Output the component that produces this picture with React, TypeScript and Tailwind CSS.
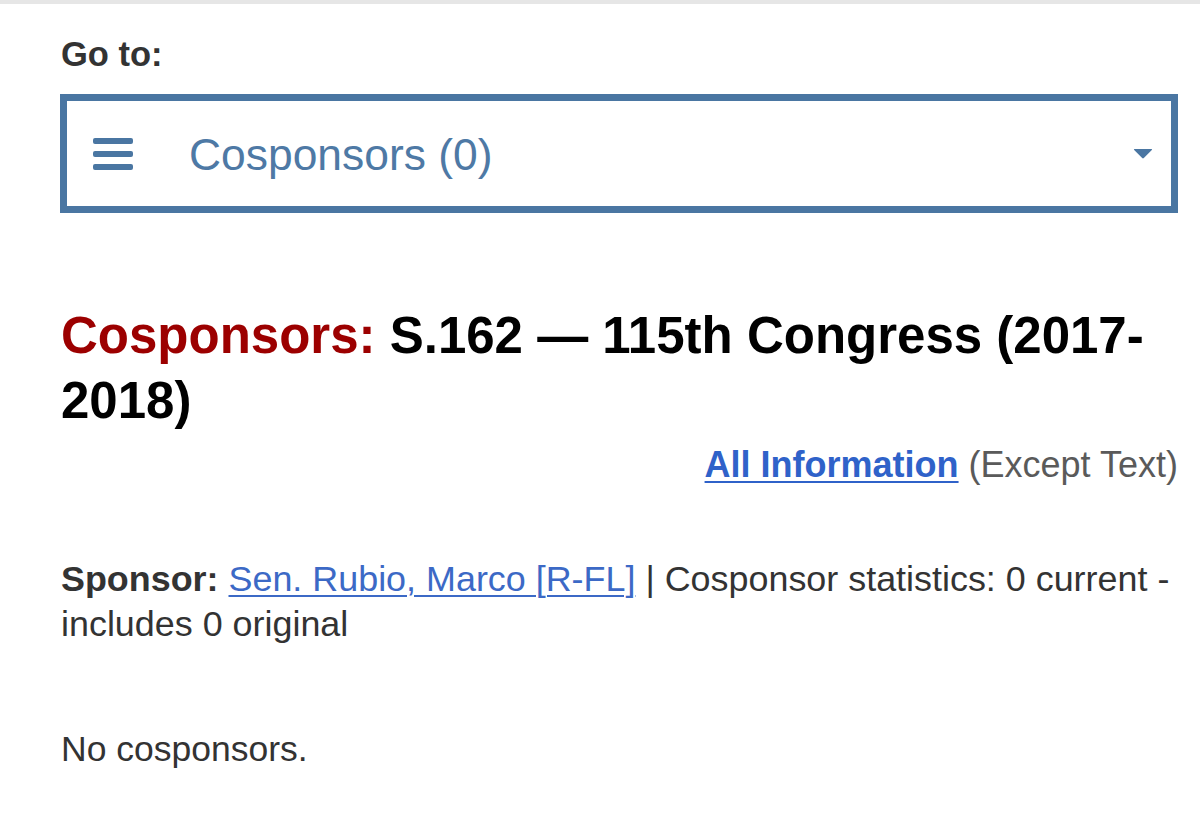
import * as React from "react"

const FONT = { fontFamily: '"Liberation Sans", Arial, Helvetica, sans-serif' }

function MenuIcon() {
  return (
    <div className="flex w-[40px] flex-col gap-[7px]">
      <span className="block h-[6px] w-full rounded-[2px] bg-[#4a76a2]" />
      <span className="block h-[6px] w-full rounded-[2px] bg-[#4a76a2]" />
      <span className="block h-[6px] w-full rounded-[2px] bg-[#4a76a2]" />
    </div>
  )
}

function Caret() {
  return (
    <svg width="20" height="11" viewBox="0 0 20 11" className="shrink-0">
      <path d="M1.5 1 L18.5 1 Q19.6 1 18.8 1.9 L10.8 10 Q10 10.8 9.2 10 L1.2 1.9 Q0.4 1 1.5 1 Z" fill="#4a76a2" />
    </svg>
  )
}

export default function App() {
  return (
    <div className="min-h-[836px] w-[1200px] bg-white" style={FONT}>
      <div className="h-[4px] w-full bg-[#e6e6e6]" />

      <div className="px-[61px] pr-[22px]">
        {/* Go to */}
        <div className="mt-[30px] text-[34.5px] font-bold leading-[40px] text-[#333333]">Go to:</div>

        <div className="-ml-[1px] mt-[20px] flex h-[119px] items-center border-[7px] border-[#4a76a2] pl-[26px] pr-[18px]">
          <MenuIcon />
          <div className="ml-[56px] flex-1 pt-[2px] text-[44.4px] leading-[50px] text-[#4e79a5]">Cosponsors (0)</div>
          <Caret />
        </div>

        {/* Title */}
        <h1 className="mt-[90px] text-[51px] font-bold leading-[65px] text-black">
          <span className="text-[#9c0000]">Cosponsors:</span> S.162 — 115th Congress (2017-2018)
        </h1>

        <div className="mt-[12px] text-right text-[36px] leading-[40px] text-[#5a5a5a]">
          <a href="#" className="font-bold text-[#2f62c9] underline decoration-[2px] underline-offset-[4px]">All Information</a>{" "}
          (Except Text)
        </div>

        {/* Sponsor */}
        <div className="mt-[72px] text-[35.9px] leading-[45px] text-[#333333]">
          <strong className="font-bold">Sponsor:</strong>{" "}
          <a href="#" className="text-[#3c69c6] underline decoration-[2px] underline-offset-[4px]">Sen. Rubio, Marco [R-FL]</a>{" "}
          | Cosponsor statistics: 0 current - includes 0 original
        </div>

        <div className="mt-[80px] text-[35.5px] leading-[45px] text-[#333333]">No cosponsors.</div>
      </div>
    </div>
  )
}
